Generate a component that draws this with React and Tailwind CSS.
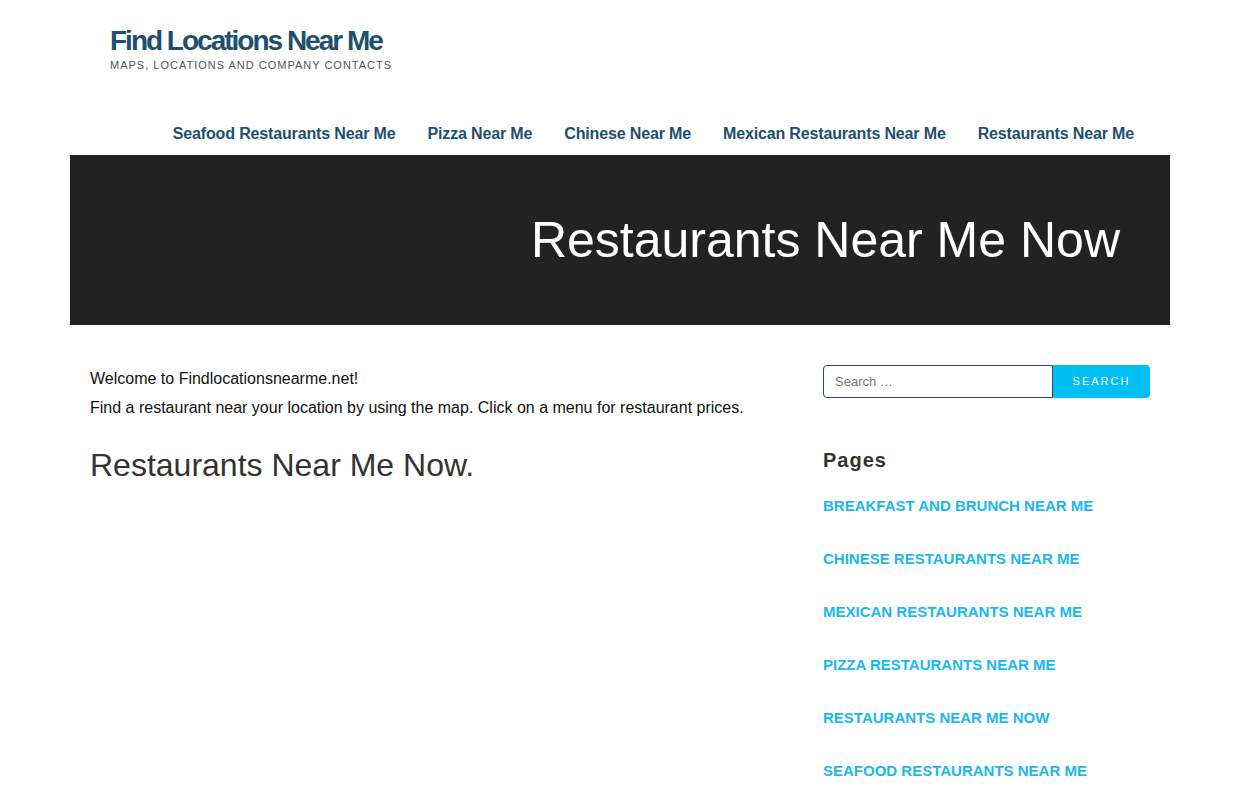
import React from "react";

const navItems = [
  "Seafood Restaurants Near Me",
  "Pizza Near Me",
  "Chinese Near Me",
  "Mexican Restaurants Near Me",
  "Restaurants Near Me",
];

const pages = [
  "Breakfast and Brunch Near Me",
  "Chinese Restaurants Near Me",
  "Mexican Restaurants Near Me",
  "Pizza Restaurants Near Me",
  "Restaurants Near Me Now",
  "Seafood Restaurants Near Me",
];

export default function App() {
  return (
    <div className="min-h-screen bg-white font-['Liberation_Sans',Arial,sans-serif]">
      <div className="mx-auto w-[1100px]">
        {/* header */}
        <header className="px-10 pt-[25px]">
          <h1 className="text-[28px] font-bold leading-[32px] tracking-[-2px] text-[#1d4f6e]">
            Find Locations Near Me
          </h1>
          <p className="text-[11px] uppercase tracking-[1px] text-[#555]">
            Maps, locations and company contacts
          </p>
        </header>

        <nav className="mt-[44px] flex justify-end pr-5">
          {navItems.map((item) => (
            <a
              key={item}
              href="#"
              className="px-4 text-[16px] font-bold leading-[32px] tracking-[-0.15px] text-[#1d4f6e]"
            >
              {item}
            </a>
          ))}
        </nav>

        {/* hero */}
        <section className="mt-[5px] flex h-[170px] items-center justify-end bg-[#222] pr-[50px]">
          <h2 className="text-[50px] leading-none text-white">Restaurants Near Me Now</h2>
        </section>

        {/* content */}
        <div className="flex px-5 pt-10">
          <main className="flex-1 pr-10">
            <p className="-mt-px text-[16px] leading-[29px] text-[#111]">Welcome to Findlocationsnearme.net!</p>
            <p className="text-[16px] leading-[29px] text-[#111]">
              Find a restaurant near your location by using the map. Click on a menu for restaurant prices.
            </p>
            <h3 className="mt-[23px] text-[32px] font-light leading-[40px] text-[#333]">
              Restaurants Near Me Now.
            </h3>
          </main>

          <aside className="w-[327px]">
            <form className="flex h-[33px]" onSubmit={(e) => e.preventDefault()}>
              <input
                placeholder="Search …"
                className="h-full w-[230px] rounded-l-[4px] border border-[#2d4b5b] px-[11px] text-[13px] text-[#333] placeholder:text-[#777] outline-none"
              />
              <button className="h-full flex-1 rounded-r-[4px] bg-[#00bff5] text-[11px] uppercase tracking-[2px] text-white">
                Search
              </button>
            </form>

            <h4 className="mt-[47px] text-[20px] font-bold tracking-[1px] text-[#333]">Pages</h4>
            <ul className="mt-[22px]">
              {pages.map((p) => (
                <li key={p} className="mb-[35px] text-[15px] font-bold uppercase leading-[18px] text-[#1ab8ee]">
                  <a href="#">{p}</a>
                </li>
              ))}
            </ul>
          </aside>
        </div>
      </div>
    </div>
  );
}
